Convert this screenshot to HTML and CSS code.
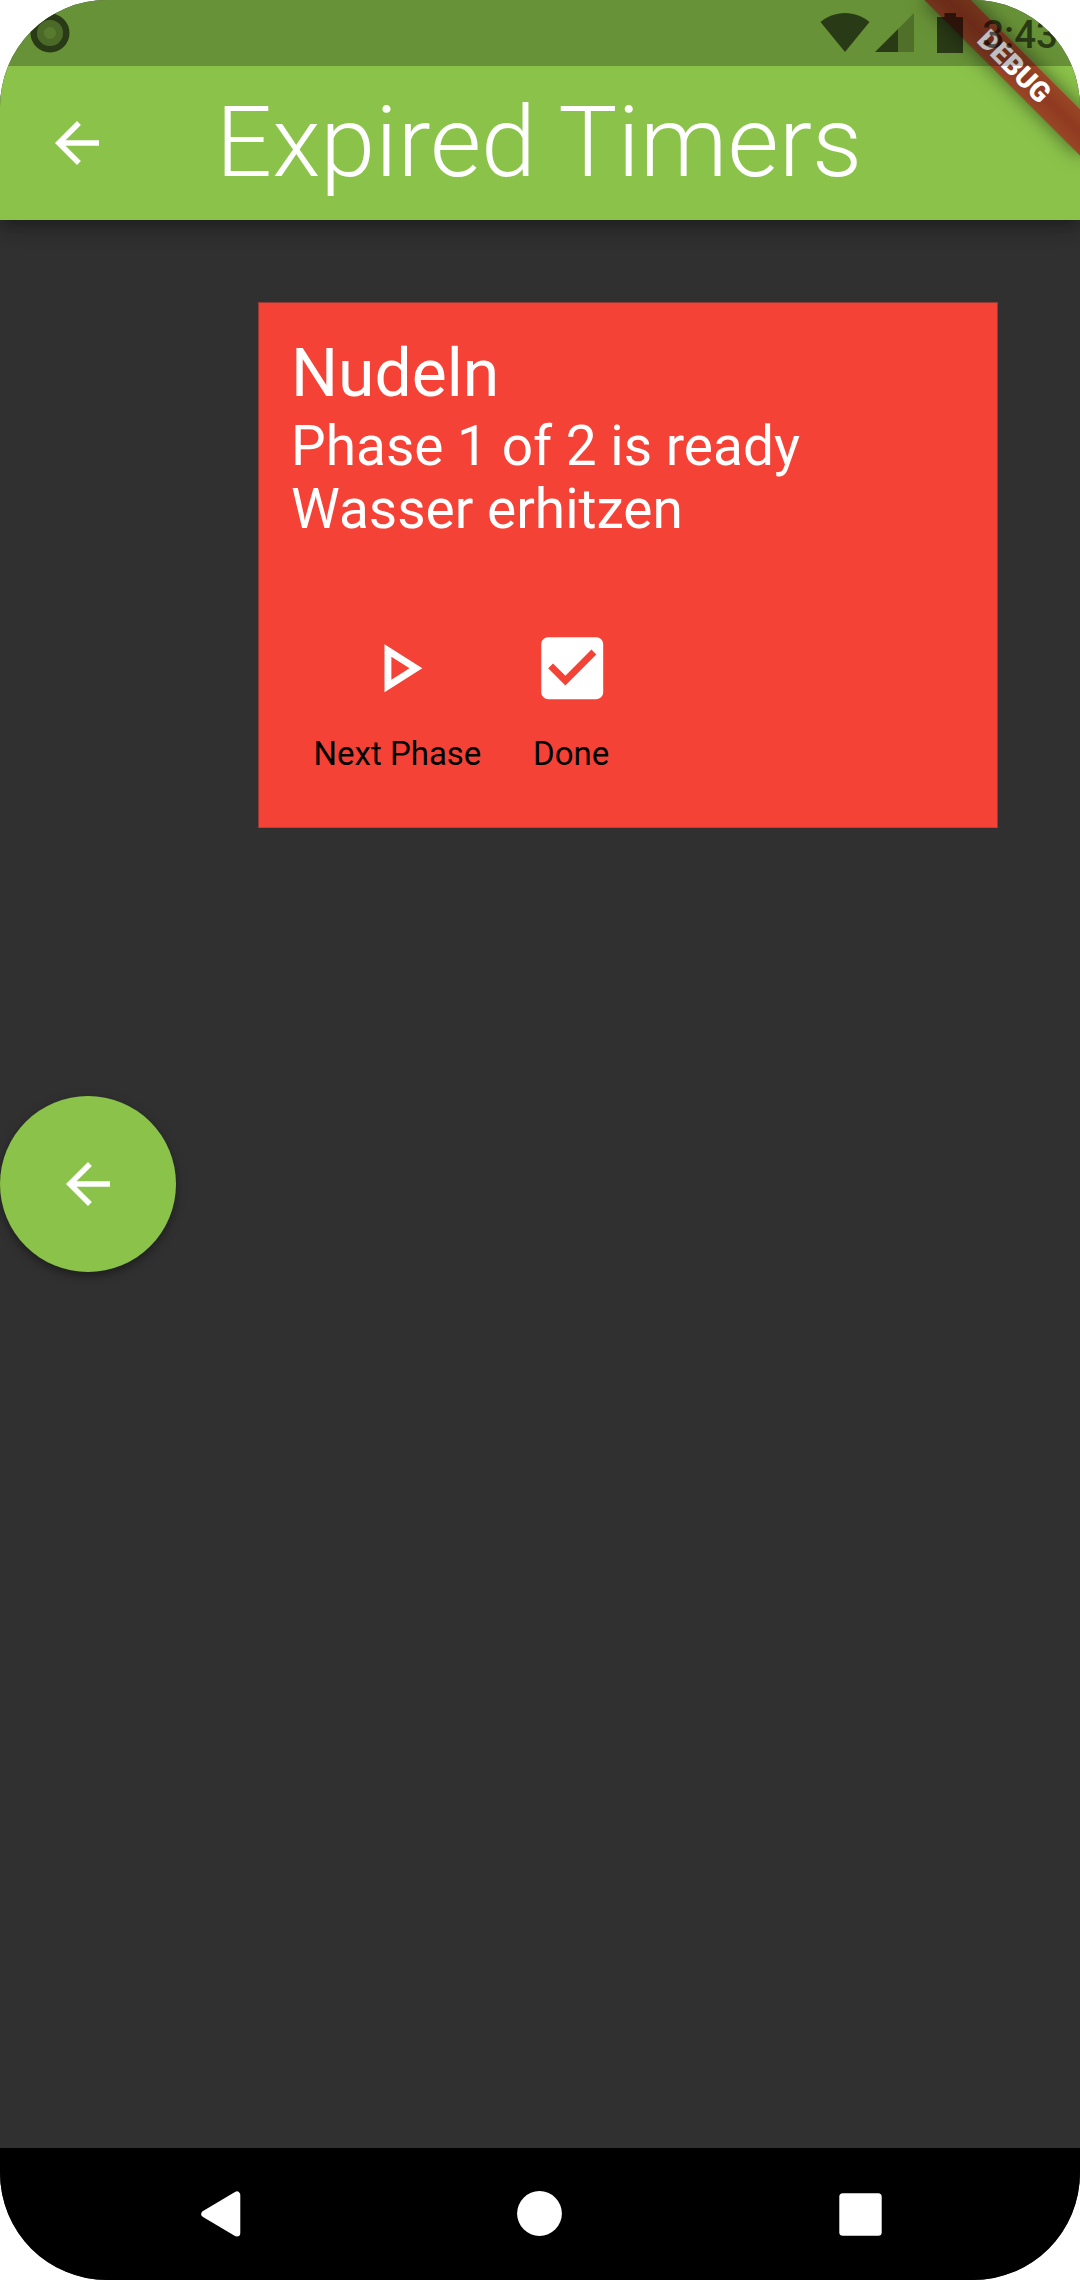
FILE: index.html
```html
<!DOCTYPE html>
<html lang="en">
<head>
<meta charset="utf-8">
<title>Expired Timers</title>
<link rel="stylesheet" href="styles.css">
</head>
<body>
<div class="screen">
  <header class="header">
    <div class="status-bar">
      <svg class="status-recording" width="40" height="40" viewBox="0 0 40 40">
        <circle cx="20" cy="20" r="16.25" fill="none" stroke="#000" stroke-opacity=".6" stroke-width="6.5"/>
        <circle cx="20" cy="20" r="9.5" fill="none" stroke="#000" stroke-opacity=".28" stroke-width="7"/>
        <circle cx="20" cy="20" r="6" fill="#000" fill-opacity=".16"/>
      </svg>
      <div class="status-icons">
        <svg class="wifi" width="50" height="39" viewBox="0 0 50 39">
          <path d="M25 39 .5 9C7 3.500 15.500 0 25 0s18 3.500 24.500 9z"/>
        </svg>
        <svg class="signal" width="39" height="39" viewBox="0 0 39 39">
          <path d="M0 39 23 16V39z"/>
          <path d="M23 16 39 0V39H23z" fill-opacity=".38"/>
        </svg>
        <svg class="battery" width="26" height="40" viewBox="0 0 26 40">
          <path d="M0 4H7.500V0H19V4H26V40H0z"/>
        </svg>
        <span class="clock">3:43</span>
      </div>
    </div>
    <div class="toolbar">
      <button class="back" aria-label="Back">
        <svg width="66" height="66" viewBox="0 0 24 24"><path d="M20 11H7.830l5.590-5.590L12 4l-8 8 8 8 1.410-1.410L7.830 13H20v-2z"/></svg>
      </button>
      <h1 class="title">Expired Timers</h1>
    </div>
    <div class="debug-banner">DEBUG</div>
  </header>

  <main class="content">
    <button class="fab" aria-label="Back">
      <svg width="66" height="66" viewBox="0 0 24 24"><path d="M20 11H7.830l5.590-5.590L12 4l-8 8 8 8 1.410-1.410L7.830 13H20v-2z"/></svg>
    </button>
    <section class="card">
      <h2 class="timer-name">Nudeln</h2>
      <p class="timer-text">Phase 1 of 2 is ready</p>
      <p class="timer-text">Wasser erhitzen</p>
      <div class="actions">
        <button class="action">
          <svg width="82.500" height="82.500" viewBox="0 0 24 24"><path d="M10 8.640L15.270 12 10 15.360V8.640M8 5v14l11-7L8 5z"/></svg>
          <span>Next Phase</span>
        </button>
        <button class="action">
          <svg width="82.500" height="82.500" viewBox="0 0 24 24"><path d="M19 3H5c-1.110 0-2 .9-2 2v14c0 1.100.89 2 2 2h14c1.110 0 2-.9 2-2V5c0-1.100-.89-2-2-2zm-9 14l-5-5 1.410-1.410L10 14.170l7.590-7.590L19 8l-9 9z"/></svg>
          <span>Done</span>
        </button>
      </div>
    </section>
  </main>

  <nav class="nav-bar">
    <svg width="41" height="46" viewBox="0 0 41 46"><path d="M4.800 23 36.800 4V42z" stroke="#fff" stroke-width="7" stroke-linejoin="round"/></svg>
    <svg width="46" height="46" viewBox="0 0 46 46"><circle cx="22.500" cy="22.500" r="22.400"/></svg>
    <svg width="43" height="43" viewBox="0 0 43 43"><rect x=".3" y=".3" width="42.400" height="42.400" rx="3.500"/></svg>
  </nav>
</div>
</body>
</html>
```
FILE: styles.css
```css
* {
  box-sizing: border-box;
}

body {
  margin: 0;
  background: #fff;
  font-family: Roboto, "Liberation Sans", sans-serif;
}

h1, h2, p {
  margin: 0;
  font-weight: 400;
}

button {
  border: 0;
  padding: 0;
  background: none;
  font: inherit;
}

svg {
  display: block;
  flex: none;
}

.screen {
  position: relative;
  display: flex;
  flex-direction: column;
  width: 1080px;
  height: 2280px;
  overflow: hidden;
  border-radius: 107px;
  background: #303030;
}

.header {
  position: relative;
  z-index: 1;
  height: 220px;
  background: #8bc34a;
  box-shadow: 0 5px 11px -3px rgba(0, 0, 0, .2), 0 11px 14px rgba(0, 0, 0, .14), 0 3px 28px rgba(0, 0, 0, .12);
}

.status-bar {
  position: relative;
  z-index: 2;
  display: flex;
  justify-content: space-between;
  height: 66px;
  padding: 13px 22px 0 30px;
  background: rgba(0, 0, 0, .25);
}

.status-icons {
  display: flex;
  align-items: flex-start;
  fill: rgba(0, 0, 0, .6);
}

.signal {
  margin-left: 5px;
}

.battery {
  margin-left: 23px;
}

.clock {
  margin-left: 19px;
  color: rgba(0, 0, 0, .6);
  font-size: 38.5px;
  font-weight: 500;
  line-height: 44px;
}

.toolbar {
  display: grid;
  grid-template-columns: 154px 1fr 156px;
  align-items: center;
  height: 154px;
}

.back {
  display: flex;
  justify-content: center;
  fill: #fff;
}

.title {
  padding-bottom: 2px;
  color: #fff;
  font-size: 99px;
  font-weight: 300;
  line-height: 116px;
  text-align: center;
  white-space: nowrap;
}

.debug-banner {
  position: absolute;
  z-index: 1;
  top: 77px;
  left: 970px;
  width: 220px;
  height: 33px;
  padding-left: 1px;
  transform: rotate(45deg);
  transform-origin: 110px -77px;
  background:
    linear-gradient(rgba(183, 28, 28, .627), rgba(183, 28, 28, .627)),
    linear-gradient(rgba(0, 0, 0, .27), rgba(0, 0, 0, .45), rgba(0, 0, 0, .27));
  box-shadow: 0 0 20px rgba(0, 0, 0, .5);
  color: #fff;
  font-size: 28px;
  font-weight: 900;
  line-height: 33px;
  text-align: center;
}

.content {
  flex: 1;
  display: flex;
  align-items: center;
}

.fab {
  display: flex;
  align-items: center;
  justify-content: center;
  width: 176px;
  height: 176px;
  border-radius: 50%;
  background: #8bc34a;
  box-shadow: 0 6px 8px -3px rgba(0, 0, 0, .2), 0 3px 6px rgba(0, 0, 0, .14), 0 3px 14px rgba(0, 0, 0, .12);
  fill: #fff;
}

.card {
  align-self: flex-start;
  width: 740px;
  height: 526px;
  margin: 82px 0 0 82px;
  padding: 32px 32px 0;
  border: 1px solid #923a33;
  border-bottom-color: #c03e36;
  background: #f44336;
  color: #fff;
}

.timer-name {
  margin-bottom: 3px;
  font-size: 66px;
  line-height: 77px;
}

.timer-text {
  font-size: 55px;
  line-height: 63px;
}

.actions {
  display: flex;
  gap: 47.5px;
  margin-top: 86.4px;
  padding-left: 22.5px;
}

.action {
  display: flex;
  flex-direction: column;
  align-items: center;
  gap: 24.3px;
  color: #000;
  font-size: 33px;
  line-height: 39px;
}

.action svg {
  margin-left: 2px;
  fill: #fff;
}

.nav-bar {
  display: flex;
  align-items: center;
  justify-content: space-between;
  height: 132px;
  padding: 0 198px 0 200px;
  background: #000;
  fill: #fff;
}
```
